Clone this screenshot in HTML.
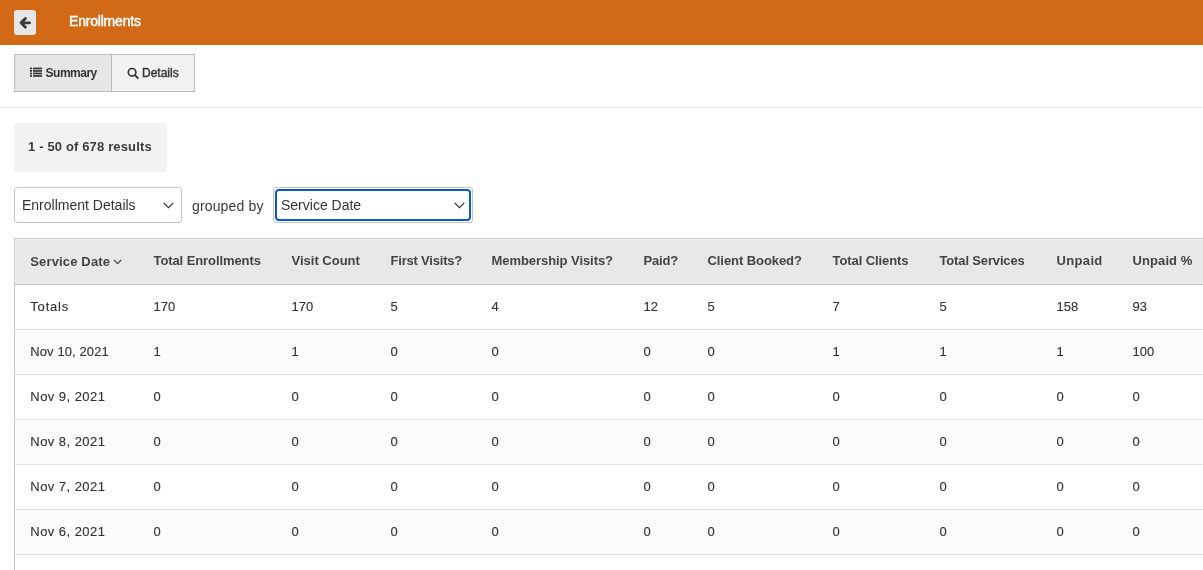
<!DOCTYPE html>
<html><head><meta charset="utf-8">
<style>
*{box-sizing:border-box;margin:0;padding:0}
html,body{width:1203px;height:570px;overflow:hidden;background:#fff;font-family:"Liberation Sans",sans-serif;color:#333}
#wrap{position:absolute;left:0;top:0;width:1203px;height:570px;overflow:hidden;will-change:transform}
.topbar{position:absolute;left:0;top:0;width:1203px;height:45px;background:#d16916}
.back{position:absolute;left:14px;top:10px;width:22px;height:25px;background:#e6e6e6;border-radius:3px}
.back svg{position:absolute;left:5px;top:6px}
.title{position:absolute;left:69px;top:13px;font-size:14px;color:#fff;line-height:16px;letter-spacing:-0.2px;-webkit-text-stroke:0.45px #fff}
.tabs{position:absolute;left:14px;top:54px;height:38px;width:181px;border:1px solid #bbb;background:#f2f2f2}
.tab{position:absolute;top:0;height:36px;font-size:12px;color:#333}
.tab1{left:0;width:97px;background:#e6e6e6;border-right:1px solid #bbb}
.tab2{left:97px;width:82px}
.tab span{position:absolute;top:11px;line-height:14px;-webkit-text-stroke:0.4px #333}
.sep{position:absolute;left:0;top:107px;width:1203px;height:1px;background:#e3e3e3}
.results{position:absolute;left:14px;top:123px;width:153px;height:49px;background:#f2f2f2;border-radius:3px}
.results span{position:absolute;left:14px;top:16px;font-size:13px;font-weight:bold;color:#3b3b3b;line-height:15px;letter-spacing:0.15px}
.sel{position:absolute;top:187px;height:36px;border:1px solid #c4c4c4;border-radius:3px;background:#fff;font-size:14px;color:#333}
.sel span{position:absolute;top:9px;line-height:16px}
.sel svg{position:absolute;top:14px}
.sel1{left:14px;width:168px}
.sel2{left:273px;width:200px}
.ring{position:absolute;left:1px;top:1px;right:1px;bottom:1px;border:2px solid #0b57d0;border-radius:4px}
.grouped{position:absolute;left:192px;top:198px;font-size:14px;color:#3a3a3a;line-height:16px;letter-spacing:0.15px}
.tbl{position:absolute;left:14px;top:238px;width:1300px;border-top:1px solid #c8c8c8;border-left:1px solid #c8c8c8}
.row{position:relative;height:45px;border-bottom:1px solid #e0e0e0;background:#fff}
.row.alt{background:#fbfbfb}
.row.head{height:46px;background:#e8e8e8;border-bottom:1px solid #c8c8c8}
.row div{position:absolute;top:14px;font-size:13px;line-height:15px;color:#333;white-space:nowrap;-webkit-text-stroke:0.12px #333}
.row.head div{top:14px;font-weight:bold;color:#444;-webkit-text-stroke:0}
.sort{position:absolute;left:98px;top:19.6px}
.row.head{box-shadow:inset 1px 1px 0 #efefef}
</style></head><body><div id="wrap">
<div class="topbar">
  <div class="back"><svg width="12" height="14" viewBox="0 0 12 14"><path d="M6.4 2.4L2 6.8L6.4 11.2M2.2 6.8H10.6" fill="none" stroke="#3b3b3b" stroke-width="2.8" stroke-linecap="round" stroke-linejoin="round"/></svg></div>
  <div class="title">Enrollments</div>
</div>
<div class="tabs">
  <div class="tab tab1"><svg style="position:absolute;left:15px;top:12px" width="13" height="11" viewBox="0 0 13 11"><g fill="#333"><rect x="0" y="0.6" width="2" height="1.7"/><rect x="3" y="0.6" width="9" height="1.7"/><rect x="0" y="3.1" width="2" height="1.7"/><rect x="3" y="3.1" width="9" height="1.7"/><rect x="0" y="5.6" width="2" height="1.7"/><rect x="3" y="5.6" width="9" height="1.7"/><rect x="0" y="8.1" width="2" height="1.7"/><rect x="3" y="8.1" width="9" height="1.7"/></g></svg><span style="left:30.6px;top:11px;letter-spacing:-0.5px;font-weight:bold;-webkit-text-stroke:0">Summary</span></div>
  <div class="tab tab2"><svg style="position:absolute;left:15px;top:12px" width="13" height="13" viewBox="0 0 13 13"><circle cx="5.1" cy="5.3" r="3.8" fill="none" stroke="#333" stroke-width="1.6"/><path d="M8 8.2L10.8 11" stroke="#333" stroke-width="1.8" stroke-linecap="round"/></svg><span style="left:30px">Details</span></div>
</div>
<div class="sep"></div>
<div class="results"><span>1 - 50 of 678 results</span></div>
<div class="sel sel1"><span style="left:7px">Enrollment Details</span><svg style="left:148px" width="11" height="7" viewBox="0 0 11 7"><path d="M0.7 0.9L5.5 5.6L10.3 0.9" fill="none" stroke="#333" stroke-width="1.3"/></svg></div>
<div class="grouped">grouped by</div>
<div class="sel sel2"><div class="ring"></div><span style="left:7px">Service Date</span><svg style="left:180px" width="11" height="7" viewBox="0 0 11 7"><path d="M0.7 0.9L5.5 5.6L10.3 0.9" fill="none" stroke="#333" stroke-width="1.3"/></svg></div>
<div class="tbl">
<div class="row head"><div style="left:15.3px;top:15px;letter-spacing:0.15px">Service Date</div><svg class="sort" width="10" height="7" viewBox="0 0 10 7"><path d="M1 1L4.6 4.6L8.2 1" fill="none" stroke="#444" stroke-width="1.1"/></svg><div style="left:138.5px;letter-spacing:-0.09px">Total Enrollments</div><div style="left:276.5px;letter-spacing:0px">Visit Count</div><div style="left:375.5px;letter-spacing:-0.2px">First Visits?</div><div style="left:476.5px;letter-spacing:-0.06px">Membership Visits?</div><div style="left:628.5px;letter-spacing:-0.2px">Paid?</div><div style="left:692.5px;letter-spacing:-0.07px">Client Booked?</div><div style="left:817.5px;letter-spacing:-0.08px">Total Clients</div><div style="left:924.5px;letter-spacing:-0.15px">Total Services</div><div style="left:1041.5px;letter-spacing:0.35px">Unpaid</div><div style="left:1117.5px;letter-spacing:0.1px">Unpaid %</div></div>
<div class="row"><div style="left:15.3px;letter-spacing:0.8px">Totals</div><div style="left:138.5px">170</div><div style="left:276.5px">170</div><div style="left:375.5px">5</div><div style="left:476.5px">4</div><div style="left:628.5px">12</div><div style="left:692.5px">5</div><div style="left:817.5px">7</div><div style="left:924.5px">5</div><div style="left:1041.5px">158</div><div style="left:1117.5px">93</div></div>
<div class="row alt"><div style="left:15.3px;letter-spacing:0.1px">Nov 10, 2021</div><div style="left:138.5px">1</div><div style="left:276.5px">1</div><div style="left:375.5px">0</div><div style="left:476.5px">0</div><div style="left:628.5px">0</div><div style="left:692.5px">0</div><div style="left:817.5px">1</div><div style="left:924.5px">1</div><div style="left:1041.5px">1</div><div style="left:1117.5px">100</div></div>
<div class="row"><div style="left:15.3px;letter-spacing:0.45px">Nov 9, 2021</div><div style="left:138.5px">0</div><div style="left:276.5px">0</div><div style="left:375.5px">0</div><div style="left:476.5px">0</div><div style="left:628.5px">0</div><div style="left:692.5px">0</div><div style="left:817.5px">0</div><div style="left:924.5px">0</div><div style="left:1041.5px">0</div><div style="left:1117.5px">0</div></div>
<div class="row alt"><div style="left:15.3px;letter-spacing:0.45px">Nov 8, 2021</div><div style="left:138.5px">0</div><div style="left:276.5px">0</div><div style="left:375.5px">0</div><div style="left:476.5px">0</div><div style="left:628.5px">0</div><div style="left:692.5px">0</div><div style="left:817.5px">0</div><div style="left:924.5px">0</div><div style="left:1041.5px">0</div><div style="left:1117.5px">0</div></div>
<div class="row"><div style="left:15.3px;letter-spacing:0.45px">Nov 7, 2021</div><div style="left:138.5px">0</div><div style="left:276.5px">0</div><div style="left:375.5px">0</div><div style="left:476.5px">0</div><div style="left:628.5px">0</div><div style="left:692.5px">0</div><div style="left:817.5px">0</div><div style="left:924.5px">0</div><div style="left:1041.5px">0</div><div style="left:1117.5px">0</div></div>
<div class="row alt"><div style="left:15.3px;letter-spacing:0.45px">Nov 6, 2021</div><div style="left:138.5px">0</div><div style="left:276.5px">0</div><div style="left:375.5px">0</div><div style="left:476.5px">0</div><div style="left:628.5px">0</div><div style="left:692.5px">0</div><div style="left:817.5px">0</div><div style="left:924.5px">0</div><div style="left:1041.5px">0</div><div style="left:1117.5px">0</div></div>
<div class="row"></div>
</div>
</div></body></html>
